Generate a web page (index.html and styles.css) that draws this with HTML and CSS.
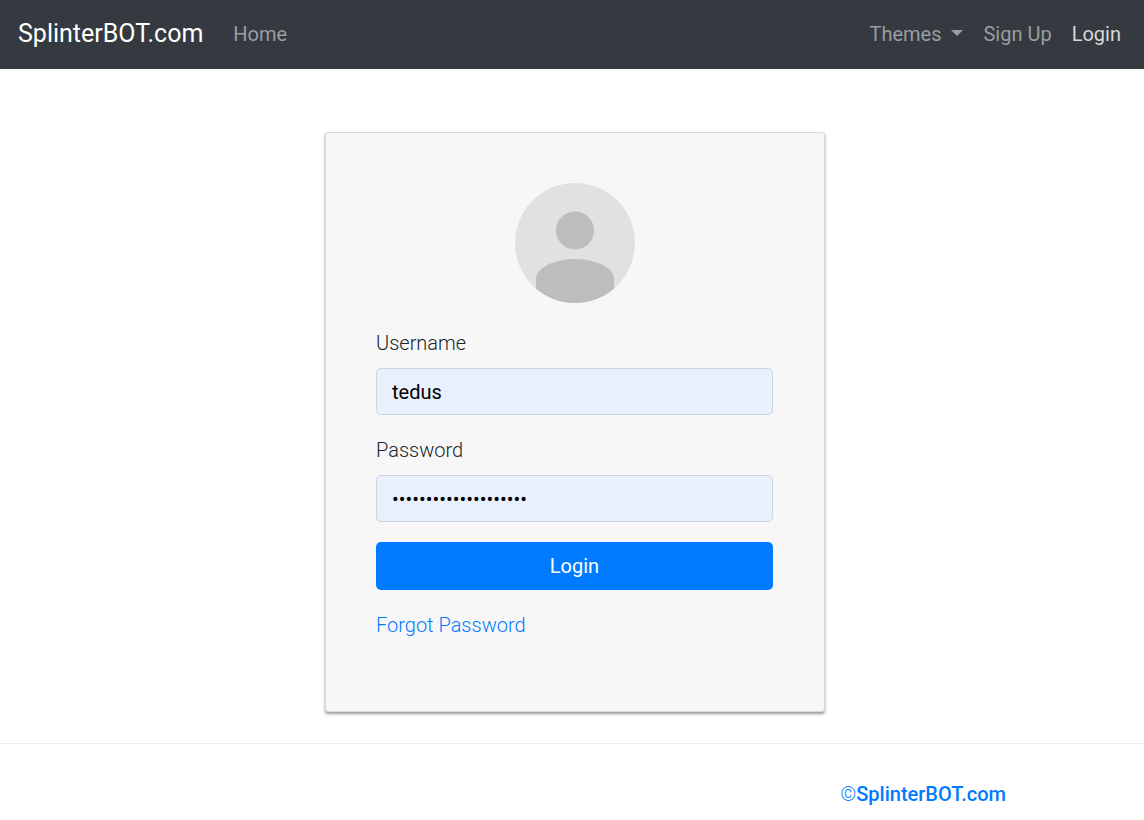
FILE: index.html
```html
<!DOCTYPE html>
<html lang="en">
<head>
<meta charset="utf-8">
<meta name="viewport" content="width=device-width, initial-scale=1">
<title>SplinterBOT.com - Login</title>
<link rel="stylesheet" href="styles.css">
</head>
<body>
<nav class="navbar">
  <a class="brand" href="#">SplinterBOT.com</a>
  <a class="nav-link" href="#">Home</a>
  <div class="nav-right">
    <button class="nav-link dropdown" type="button">Themes</button>
    <a class="nav-link" href="#">Sign Up</a>
    <a class="nav-link active" href="#">Login</a>
  </div>
</nav>
<main class="main">
  <form class="card">
    <svg class="avatar" viewBox="0 0 120 120" aria-hidden="true">
      <clipPath id="disc"><circle cx="60" cy="60" r="60"/></clipPath>
      <circle cx="60" cy="60" r="60" fill="#e1e1e1"/>
      <g clip-path="url(#disc)" fill="#bdbdbd">
        <circle cx="60" cy="47.500" r="19"/>
        <path d="M21 120V96C21 84 41 76 60 76S99 84 99 96V120Z"/>
      </g>
    </svg>
    <label class="label" for="username">Username</label>
    <input class="input" id="username" type="text" value="tedus">
    <label class="label" for="password">Password</label>
    <input class="input" id="password" type="password" value="aaaaaaaaaaaaaaaaaaaa">
    <button class="submit" type="submit">Login</button>
    <a class="forgot" href="#">Forgot Password</a>
  </form>
</main>
<footer class="footer"><a class="copyright" href="#"><span class="mark">©</span>SplinterBOT.com</a></footer>
</body>
</html>
```
FILE: styles.css
```css
* { box-sizing: border-box; }
body {
  margin: 0;
  background: #fff;
  color: #212529;
  font: 300 20px/30px Roboto, sans-serif;
}
a { text-decoration: none; }
.navbar {
  display: flex;
  align-items: center;
  padding: 19px 13px 20px 18px;
  background: #343a40;
  font-weight: 400;
}
.brand { margin-right: 20px; color: #fff; font-size: 25px; }
.nav-link {
  padding: 0 10px;
  border: 0;
  background: none;
  color: #9a9da0;
  font: inherit;
}
.nav-link.active { color: #d6d8d9; }
.nav-right { display: flex; margin-left: auto; }
.dropdown::after {
  content: "";
  display: inline-block;
  margin-left: 10px;
  vertical-align: 5px;
  border: 6px solid transparent;
  border-top-color: currentColor;
  border-bottom: 0;
}
.main { padding: 63px 20px 31px 26px; }
.card {
  display: flex;
  flex-direction: column;
  width: 100%;
  max-width: 500px;
  margin: 0 auto;
  padding: 50px 51px 71px 50px;
  border: 1px solid #d9d9d9;
  border-radius: 3px;
  background: #f7f7f7;
  box-shadow: 0 2px 3px rgba(0, 0, 0, .4);
}
.avatar { width: 120px; height: 120px; margin: 0 auto 25px; }
.label { margin-bottom: 10px; }
.input {
  width: 100%;
  height: 47px;
  margin-bottom: 20px;
  padding: 0 15px;
  border: 1px solid #ced4da;
  border-radius: 5px;
  background: #e8f0fe;
  color: #000;
  font: inherit;
  font-weight: 400;
}
.submit {
  height: 48px;
  margin-bottom: 20px;
  border: 0;
  border-radius: 5px;
  background: #007bff;
  color: #fff;
  font: inherit;
  font-weight: 400;
}
.forgot { align-self: flex-start; color: #007bff; }
.footer {
  padding: 35px 138px 11px 20px;
  border-top: 1px solid #ececec;
  text-align: right;
}
.copyright { color: #007bff; font-weight: 500; }
.mark { font-weight: 300; }
```
